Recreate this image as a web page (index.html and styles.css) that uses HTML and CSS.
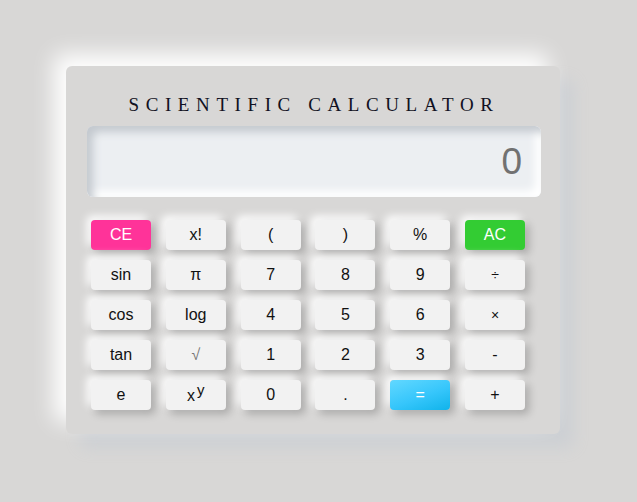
FILE: index.html
```html
<!DOCTYPE html>
<html lang="en">
<head>
<meta charset="utf-8">
<title>Scientific Calculator</title>
<link rel="stylesheet" href="styles.css">
</head>
<body>
<div class="calc">
  <h1 class="title">SCIENTIFIC CALCULATOR</h1>
  <div class="display">0</div>
  <div class="keys">
    <button class="key key-ce">CE</button>
    <button class="key">x!</button>
    <button class="key">(</button>
    <button class="key">)</button>
    <button class="key">%</button>
    <button class="key key-ac">AC</button>

    <button class="key">sin</button>
    <button class="key">π</button>
    <button class="key">7</button>
    <button class="key">8</button>
    <button class="key">9</button>
    <button class="key key-op">÷</button>

    <button class="key">cos</button>
    <button class="key">log</button>
    <button class="key">4</button>
    <button class="key">5</button>
    <button class="key">6</button>
    <button class="key key-op">×</button>

    <button class="key">tan</button>
    <button class="key key-root">√</button>
    <button class="key">1</button>
    <button class="key">2</button>
    <button class="key">3</button>
    <button class="key">-</button>

    <button class="key">e</button>
    <button class="key key-pow">x<sup>y</sup></button>
    <button class="key">0</button>
    <button class="key">.</button>
    <button class="key key-eq">=</button>
    <button class="key">+</button>
  </div>
</div>
</body>
</html>
```
FILE: styles.css
```css
html, body {
  margin: 0;
  padding: 0;
}
body {
  background: #d8d7d6;
  height: 502px;
  overflow: hidden;
  font-family: "Liberation Sans", Arial, sans-serif;
}
.calc {
  box-sizing: border-box;
  width: 494px;
  height: 368px;
  margin: 66px 0 0 66px;
  padding: 29px 19px 0 21px;
  background: #d8d7d6;
  border-radius: 6px;
  box-shadow: -12px -12px 22px #ffffff, 14px 14px 16px #cdd0d4;
}
.title {
  margin: 0;
  height: 20px;
  line-height: 20px;
  text-align: center;
  font-family: "Liberation Serif", "Times New Roman", serif;
  font-weight: normal;
  font-size: 19px;
  letter-spacing: 6.6px;
  color: #111122;
  white-space: nowrap;
}
.display {
  box-sizing: border-box;
  margin-top: 11px;
  height: 71px;
  border-radius: 6px;
  background: #eceff2;
  box-shadow: inset 6px 6px 8px #c4c9cf, inset -6px -6px 8px #ffffff;
  display: flex;
  align-items: center;
  justify-content: flex-end;
  padding-right: 19px;
  font-size: 37px;
  color: #717171;
}
.keys {
  margin-top: 23px;
  padding-left: 4px;
  display: grid;
  grid-template-columns: repeat(6, 60px);
  grid-auto-rows: 30px;
  column-gap: 14.8px;
  row-gap: 10px;
}
.key {
  border: none;
  border-radius: 4px;
  background: #f2f2f2;
  font-family: "Liberation Sans", Arial, sans-serif;
  font-size: 16px;
  color: #111;
  padding: 0;
  line-height: 30px;
  box-shadow: 4px 4px 9px rgba(0, 0, 0, 0.22), -4px -4px 8px #ffffff;
}
.key-ce {
  background: #ff3399;
  color: #fff;
}
.key-ac {
  background: #33cc33;
  color: #fff;
}
.key-eq {
  background: linear-gradient(160deg, #62d8ff 0%, #36c6fb 55%, #10b3ea 100%);
  color: #fff;
}
.key-op {
  font-size: 14px;
}
.key-root {
  color: #777;
}
.key-pow {
  padding-top: 1px;
}
.key-pow sup {
  font-size: 15px;
  line-height: 0;
  margin-left: 2px;
}
```
